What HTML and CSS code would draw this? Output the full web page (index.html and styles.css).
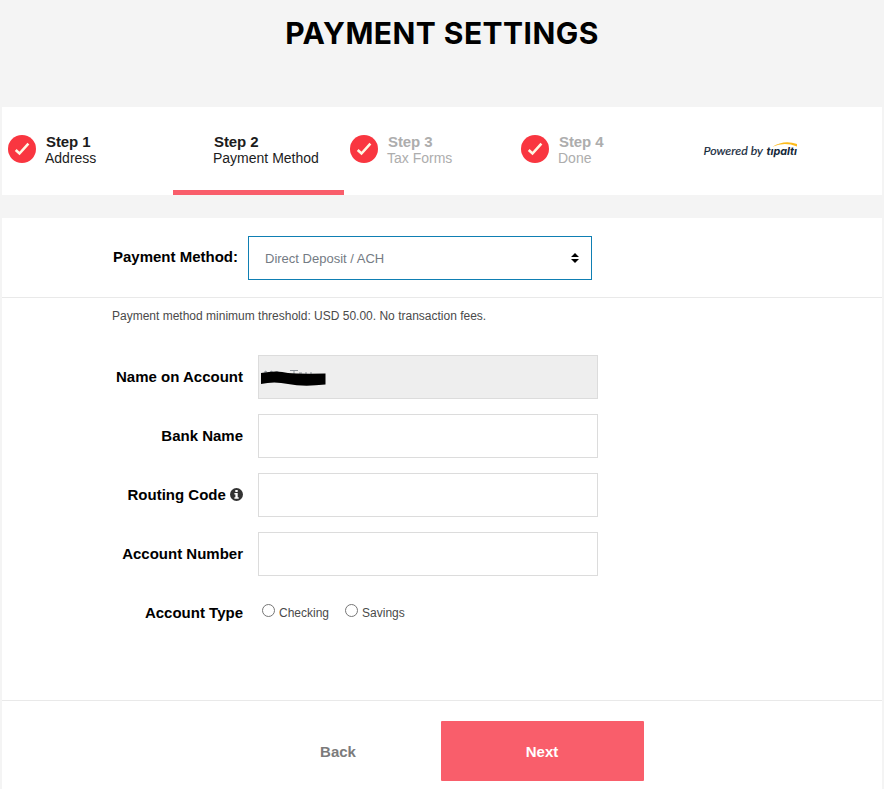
FILE: index.html
```html
<!DOCTYPE html>
<html lang="en">
<head>
<meta charset="utf-8">
<title>Payment Settings</title>
<link rel="stylesheet" href="styles.css">
</head>
<body>
<svg class="defs" width="0" height="0">
  <symbol id="check" viewBox="0 0 28 28"><circle cx="14" cy="14" r="14" fill="#f93640"/><path d="M7.700 15l3.800 3.500 8.900-9.800" fill="none" stroke="#fff8e4" stroke-width="2.600"/></symbol>
</svg>
<h1 class="title"><span>PAYMENT SETTINGS</span></h1>
<nav class="steps">
  <div class="step"><svg class="check"><use href="#check"/></svg><div class="step-text"><b>Step 1</b><span>Address</span></div></div>
  <div class="step active"><div class="step-text"><b>Step 2</b><span>Payment Method</span></div></div>
  <div class="step muted"><svg class="check"><use href="#check"/></svg><div class="step-text"><b>Step 3</b><span>Tax Forms</span></div></div>
  <div class="step muted"><svg class="check"><use href="#check"/></svg><div class="step-text"><b>Step 4</b><span>Done</span></div></div>
  <svg class="powered" viewBox="0 0 98 22" width="98" height="22">
    <text x="1.500" y="15" textLength="59.500" lengthAdjust="spacingAndGlyphs">Powered by</text>
    <text class="brand" x="64.500" y="15.300" textLength="30.500" lengthAdjust="spacingAndGlyphs">tıpaltı</text>
    <path d="M70.500 6.800Q82 -.6 95 4V6.400Q82 1.500 70.500 6.800z" fill="#fdbb1c"/>
  </svg>
</nav>
<main class="panel">
  <section class="method">
    <label>Payment Method:</label>
    <div class="select"><span>Direct Deposit / ACH</span><svg width="8" height="10" viewBox="0 0 8 10"><path d="M0 4L4 0l4 4zM0 6h8L4 10z"/></svg></div>
  </section>
  <section class="details">
    <p class="note">Payment method minimum threshold: USD 50.00. No transaction fees.</p>
    <div class="row"><label>Name on Account</label><div class="field disabled">
      <svg width="68" height="20" viewBox="0 0 68 20"><path d="M6 5v-2l2 1M11 4l2-1v2M16 4.500l2-1 2 1M31 2.500h8M35 3v3M40 5h3M46 5h2M51 5h2" fill="none" stroke="#8b9299"/><path d="M2 5Q18 2 29 5Q39 6 66.500 5.500V16.500Q44 19 29 16Q15 13 2 16z"/></svg>
    </div></div>
    <div class="row"><label>Bank Name</label><div class="field"></div></div>
    <div class="row"><label>Routing Code <svg class="info" width="13" height="13" viewBox="0 0 13 13"><circle cx="6.500" cy="6.500" r="6.500" fill="#333"/><path d="M5.300 2h2.400v2H5.300zM4.400 5h3.300v4.300h1v1.400H4.400V9.300h1V6.400h-1z" fill="#fff"/></svg></label><div class="field"></div></div>
    <div class="row"><label>Account Number</label><div class="field"></div></div>
    <div class="row"><label>Account Type</label><div class="options"><span><i></i>Checking</span><span><i></i>Savings</span></div></div>
  </section>
  <footer class="actions"><button class="back">Back</button><button class="next">Next</button></footer>
</main>
</body>
</html>
```
FILE: styles.css
```css
* { box-sizing: border-box; }
body { margin: 0; height: 789px; overflow: hidden; background: #f4f4f4; color: #000; font-family: "Liberation Sans", Arial, sans-serif; }
.defs { display: block; }
.title { margin: 0; height: 107px; padding-top: 15px; text-align: center; font: 700 30px/36px Inter, sans-serif; letter-spacing: .45px; }
.steps { display: flex; height: 88px; margin: 0 2px 23px; background: #fff; }
.step { position: relative; display: flex; width: 171px; padding: 28px 0 0 6px; color: #1c1c1c; }
.step.active { padding-left: 40px; border-bottom: 5px solid #f95e6b; }
.step.muted { color: #adadad; }
.check { width: 28px; height: 28px; margin-right: 9px; flex: none; }
.step-text { display: flex; flex-direction: column; white-space: nowrap; }
.step-text b { font-size: 15px; line-height: 13px; padding: 0 0 2px 1px; letter-spacing: -.1px; }
.step-text span { font-size: 14px; line-height: 16px; }
.powered { margin: 33px 0 0 16px; }
.powered text { font: italic 400 11.5px Lato, sans-serif; fill: #14283a; stroke: #14283a; stroke-width: .15px; }
.powered .brand { font: italic 700 11px Inter, sans-serif; stroke: none; }
.panel { height: 571px; margin: 0 2px; background: #fff; }
.method { display: flex; height: 80px; padding: 18px 0 0; border-bottom: 1px solid #e9e9e9; }
label { font-size: 15px; font-weight: 700; text-align: right; white-space: nowrap; }
.method label { width: 236px; line-height: 42px; margin-right: 10px; }
.select { display: flex; align-items: center; justify-content: space-between; width: 344px; height: 44px; padding: 0 12px 0 16px; border: 1px solid #0f7fb3; color: #747b84; font-size: 13px; }
.details { height: 402px; padding-top: 10px; }
.note { margin: 0 0 31px 110px; font-size: 12px; line-height: 16px; color: #4a4a4a; }
.row { display: flex; height: 44px; margin-bottom: 15px; }
.row label { width: 241px; line-height: 44px; margin-right: 15px; }
.info { vertical-align: -1px; }
.field { width: 340px; border: 1px solid #dcdcdc; background: #fff; }
.disabled { background: #eee; padding-top: 12px; }
.disabled svg { display: block; }
.options { display: flex; gap: 16px; padding: 12px 0 0 4px; font-size: 12px; line-height: 20px; color: #4a4a4a; }
.options span { display: flex; }
.options i { width: 13px; height: 13px; margin: 1px 4px 0 0; border: 1px solid #767676; border-radius: 50%; }
.actions { display: flex; height: 89px; padding-top: 20px; border-top: 1px solid #e9e9e9; }
button { font: 700 15px/58px "Liberation Sans", Arial, sans-serif; padding: 2px 1px 0 0; border: 0; height: 60px; }
.back { width: 205px; margin-left: 234px; background: none; color: #7b7b7b; }
.next { width: 203px; background: #f95e6b; color: #fff; border-radius: 1px; }
```
